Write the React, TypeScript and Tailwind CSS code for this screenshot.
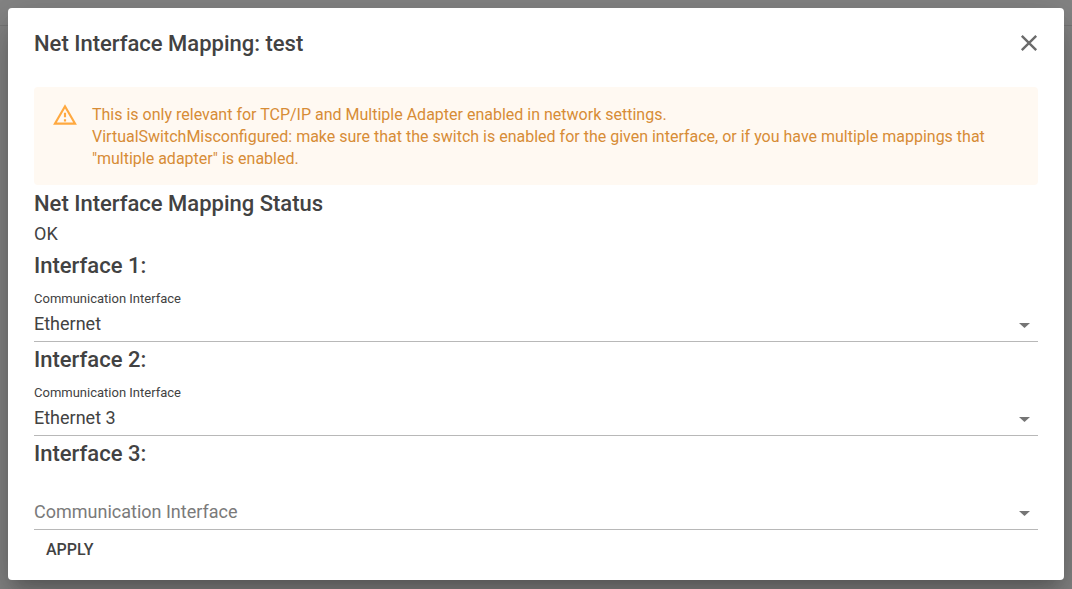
import { useState } from "react";

const OPTIONS = ["Ethernet", "Ethernet 2", "Ethernet 3"];

function WarningIcon() {
  return (
    <svg viewBox="0 0 24 24" className="-mt-0.5 size-[26px] shrink-0 fill-[#ffa940]" aria-hidden="true">
      <path d="M12 5.99L19.53 19H4.47L12 5.99M12 2L1 21h22L12 2zm1 14h-2v2h2v-2zm0-6h-2v4h2v-4z" />
    </svg>
  );
}

function CloseIcon() {
  return (
    <svg viewBox="0 0 24 24" className="size-6 fill-none stroke-[#6b6b6b] stroke-[2.4]" aria-hidden="true">
      <path d="M4.8 4.8l14.4 14.4M19.2 4.8L4.8 19.2" />
    </svg>
  );
}

function InterfaceField({ index, initial }: { index: number; initial: string }) {
  const [value, setValue] = useState(initial);
  const id = `interface-${index}`;
  return (
    <section>
      <h2 className="text-[22px] leading-9 font-medium">Interface {index}:</h2>
      <div className="grid h-[58px] items-end border-b border-[#b8b8b8]">
        <label
          htmlFor={id}
          className={
            value
              ? "pointer-events-none z-10 col-start-1 row-start-1 self-start pt-[5px] text-[13px] leading-5"
              : "pointer-events-none z-10 col-start-1 row-start-1 text-lg leading-[34px] text-[#7a7a7a]"
          }
        >
          Communication Interface
        </label>
        <select
          id={id}
          value={value}
          onChange={(e) => setValue(e.target.value)}
          className="col-start-1 row-start-1 h-[34px] w-full appearance-none bg-transparent text-lg leading-[34px] outline-none"
        >
          <option value="" />
          {OPTIONS.map((o) => (
            <option key={o}>{o}</option>
          ))}
        </select>
        <svg
          viewBox="0 0 10 5"
          className="pointer-events-none col-start-1 row-start-1 mr-2 mb-[13px] h-[5px] w-[11px] justify-self-end fill-[#757575]"
          preserveAspectRatio="none"
          aria-hidden="true"
        >
          <path d="M0 0h10L5 5z" />
        </svg>
      </div>
    </section>
  );
}

export default function App() {
  return (
    <div className="min-h-screen bg-[#858585] font-['Roboto',sans-serif] text-[#424242]">
      <div className="absolute inset-x-0 top-0 h-[26px] border-b border-[#787878]" />
      <main
        role="dialog"
        aria-labelledby="dialog-title"
        className="relative min-h-screen p-2 pb-[9px]"
      >
        <div className="rounded bg-white px-[26px] pb-2.5 shadow-[0_11px_15px_-7px_rgba(0,0,0,0.2),0_24px_38px_3px_rgba(0,0,0,0.14),0_9px_46px_8px_rgba(0,0,0,0.12)]">
          <header className="flex h-[79px] items-start justify-between pt-[18px]">
            <h1 id="dialog-title" className="text-[22px] leading-9 font-medium">
              Net Interface Mapping: test
            </h1>
            <button type="button" aria-label="Close" className="-mr-[3px] flex h-[34px] items-center">
              <CloseIcon />
            </button>
          </header>
          <div
            role="alert"
            className="flex gap-[14px] rounded bg-[#fff9f2] px-[18px] pt-[17px] pb-[15px] text-base leading-[22px] text-[#d78c36]"
          >
            <WarningIcon />
            <p>
              This is only relevant for TCP/IP and Multiple Adapter enabled in network settings.
              <br />
              VirtualSwitchMisconfigured: make sure that the switch is enabled for the given interface,
              or if you have multiple mappings that "multiple adapter" is enabled.
            </p>
          </div>
          <h2 className="pt-px text-[22px] leading-9 font-medium">Net Interface Mapping Status</h2>
          <p className="pb-0.5 text-lg leading-6">OK</p>
          <InterfaceField index={1} initial="Ethernet" />
          <InterfaceField index={2} initial="Ethernet 3" />
          <InterfaceField index={3} initial="" />
          <button type="button" className="h-10 px-3 text-base font-medium uppercase">
            Apply
          </button>
        </div>
      </main>
    </div>
  );
}
